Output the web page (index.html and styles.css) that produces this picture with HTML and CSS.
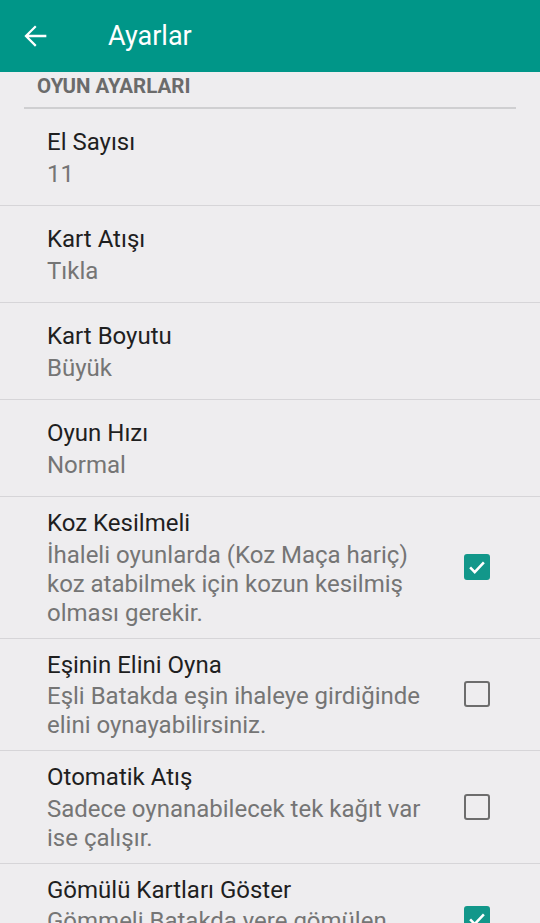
FILE: index.html
```html
<!DOCTYPE html>
<html lang="tr">
<head>
<meta charset="utf-8">
<link rel="stylesheet" href="styles.css">
</head>
<body>
<header class="toolbar">
  <svg class="back" viewBox="0 0 24 24" width="34" height="34"><path d="M20 11.1H7.6l5.5-5.5L12 4.5 4.5 12l7.5 7.5 1.1-1.1-5.5-5.5H20z" fill="#fff"/></svg>
  <h1 class="title">Ayarlar</h1>
</header>
<main class="list">
  <div class="category">OYUN AYARLARI</div>
  <div class="pref">
    <div class="text"><div class="ptitle">El Sayısı</div><div class="psum">11</div></div>
  </div>
  <div class="pref">
    <div class="text"><div class="ptitle">Kart Atışı</div><div class="psum">Tıkla</div></div>
  </div>
  <div class="pref">
    <div class="text"><div class="ptitle">Kart Boyutu</div><div class="psum">Büyük</div></div>
  </div>
  <div class="pref">
    <div class="text"><div class="ptitle">Oyun Hızı</div><div class="psum">Normal</div></div>
  </div>
  <div class="pref check">
    <div class="text"><div class="ptitle">Koz Kesilmeli</div><div class="psum">İhaleli oyunlarda (Koz Maça hariç) koz atabilmek için kozun kesilmiş olması gerekir.</div></div>
    <div class="box on"><svg viewBox="0 0 24 24" width="22" height="22"><path d="M4.5 12.5l5 5 10-10.5" fill="none" stroke="#fff" stroke-width="2.8"/></svg></div>
  </div>
  <div class="pref check">
    <div class="text"><div class="ptitle">Eşinin Elini Oyna</div><div class="psum">Eşli Batakda eşin ihaleye girdiğinde elini oynayabilirsiniz.</div></div>
    <div class="box"></div>
  </div>
  <div class="pref check">
    <div class="text"><div class="ptitle">Otomatik Atış</div><div class="psum">Sadece oynanabilecek tek kağıt var ise çalışır.</div></div>
    <div class="box"></div>
  </div>
  <div class="pref check">
    <div class="text"><div class="ptitle">Gömülü Kartları Göster</div><div class="psum">Gömmeli Batakda yere gömülen kartları gösterir.</div></div>
    <div class="box on"><svg viewBox="0 0 24 24" width="22" height="22"><path d="M4.5 12.5l5 5 10-10.5" fill="none" stroke="#fff" stroke-width="2.8"/></svg></div>
  </div>
</main>
</body>
</html>
```
FILE: styles.css
```css
html, body {
  margin: 0;
  padding: 0;
  background: #eeedef;
  font-family: Roboto, "Noto Sans", sans-serif;
}
body {
  height: 923px;
  overflow: hidden;
}
.toolbar {
  height: 72px;
  background: #009688;
  display: flex;
  align-items: center;
  padding-left: 18px;
}
.back { display: block; }
.title {
  margin: 0 0 0 56px;
  color: #fff;
  font-weight: 400;
  font-size: 27px;
}
.category {
  margin: 0 24px;
  padding: 3px 13px 0;
  height: 32px;
  font-size: 20.5px;
  font-weight: 700;
  color: #6b6b6b;
  border-bottom: 2px solid #cfcfd1;
  line-height: 22px;
}
.pref {
  display: flex;
  align-items: center;
  border-bottom: 1px solid #d6d5d8;
  padding: 17px 50px 16px 47px;
}
.pref.check { padding-top: 10px; padding-bottom: 10px; }
.text { flex: 1; }
.ptitle {
  font-size: 24px;
  color: #1f1f1f;
  line-height: 32px;
}
.psum {
  font-size: 24px;
  color: #757575;
  line-height: 29px;
  margin-top: 2px;
}
.pref.check .psum { margin-top: 1.5px; padding-right: 22px; }
.box {
  width: 22px;
  height: 22px;
  border: 2.5px solid #6d6d6d;
  border-radius: 3px;
  flex: none;
  display: flex;
  align-items: center;
  justify-content: center;
}
.box.on {
  background: #12978a;
  border-color: #12978a;
}
```
